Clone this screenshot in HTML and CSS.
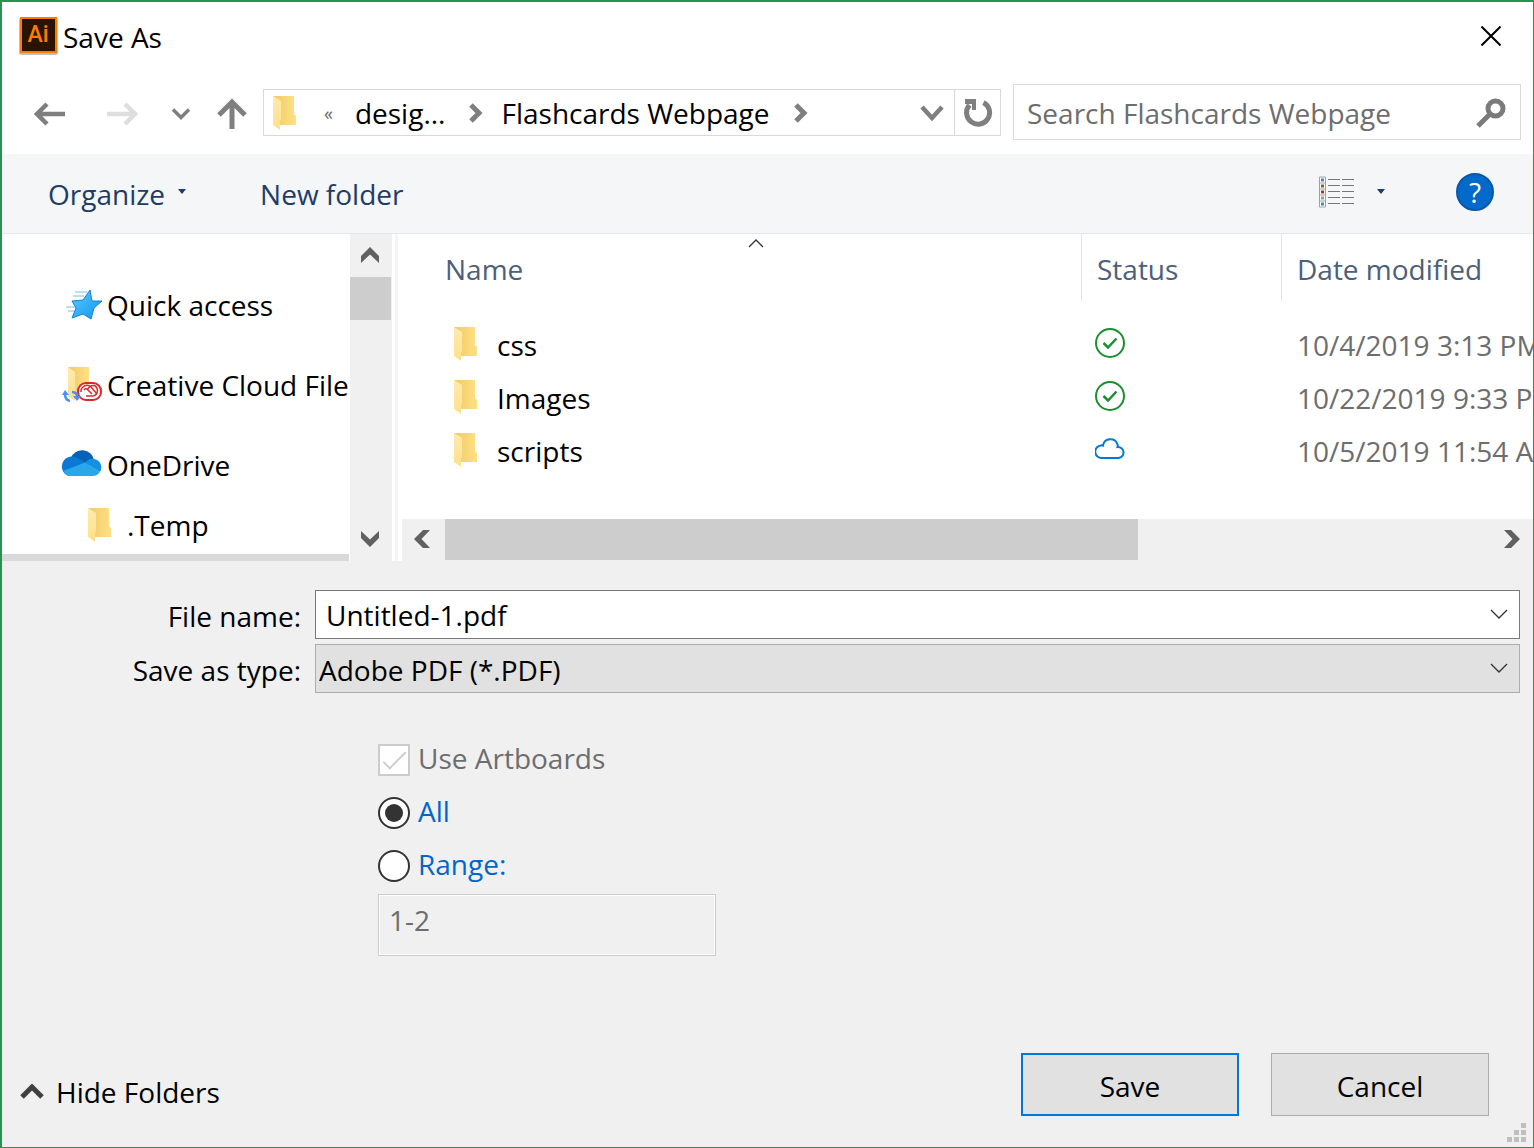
FILE: index.html
```html
<!DOCTYPE html>
<html lang="en">
<head>
<meta charset="utf-8">
<meta name="viewport" content="width=device-width, initial-scale=1">
<title>Save As</title>
<link rel="stylesheet" href="styles.css">
</head>
<body>
<svg class="defs" aria-hidden="true">
  <defs>
    <linearGradient id="folder-back" x1="0" x2="1"><stop offset="0" stop-color="#efca68"/><stop offset="1" stop-color="#ffe083"/></linearGradient>
    <linearGradient id="folder-front" x1="0" x2="0" y1="0" y2="1"><stop offset="0" stop-color="#ffebae"/><stop offset="1" stop-color="#ffe08a"/></linearGradient>
    <linearGradient id="star-fill" x1="0" x2="1" y1="0" y2="1"><stop offset="0" stop-color="#5ccbff"/><stop offset="1" stop-color="#0c95f2"/></linearGradient>
    <symbol id="folder" viewBox="0 0 24 35">
      <path d="M0 0H21V18L23 20V29H6Z" fill="url(#folder-back)"/>
      <path d="M0 0L8 5V24L7 25V34L0 29Z" fill="url(#folder-front)"/>
    </symbol>
    <symbol id="synced" viewBox="0 0 30 30">
      <circle cx="15" cy="15" r="14" fill="none" stroke="#1a8f2d" stroke-width="2"/>
      <path d="M8.500 15L13 19.500L21.500 10.500" fill="none" stroke="#1a8f2d" stroke-width="2.500"/>
    </symbol>
    <symbol id="chevron-thin" viewBox="0 0 18 10">
      <path d="M1 1L9 9L17 1" fill="none" stroke="#333" stroke-width="1.300"/>
    </symbol>
  </defs>
</svg>

<main class="dialog">
  <header class="titlebar">
    <svg class="app-icon" width="40" height="40" viewBox="0 0 40 40" aria-hidden="true">
      <rect x="0" y="2" width="39" height="37" rx="2" fill="#000" opacity=".25"/>
      <rect x="1" y="1" width="37" height="36" fill="#ff7c00"/>
      <rect x="3" y="3" width="33" height="32" fill="#2a1400"/>
      <text x="19" y="26" text-anchor="middle" class="app-letters">Ai</text>
    </svg>
    <h1 class="title">Save As</h1>
    <button class="plain close" type="button" aria-label="Close">
      <svg width="20" height="20" viewBox="0 0 20 20"><path d="M.5.500L19.500 19.500M19.500.500L.5 19.500" stroke="#000" stroke-width="2"/></svg>
    </button>
  </header>

  <nav class="navbar" aria-label="Location">
    <div class="nav-buttons">
      <button class="plain" type="button" aria-label="Back"><svg width="32" height="24" viewBox="0 0 32 24"><path d="M31 12H4M13 2L3 12L13 22" fill="none" stroke="#7f7f7f" stroke-width="4.500"/></svg></button>
      <button class="plain forward" type="button" aria-label="Forward" disabled><svg width="32" height="24" viewBox="0 0 32 24"><path d="M1 12H28M19 2L29 12L19 22" fill="none" stroke="#dedede" stroke-width="4.500"/></svg></button>
      <button class="plain recent" type="button" aria-label="Recent locations"><svg width="20" height="14" viewBox="0 0 20 14"><path d="M2 2.500L10 10.500L18 2.500" fill="none" stroke="#7f7f7f" stroke-width="3.500"/></svg></button>
      <button class="plain" type="button" aria-label="Up"><svg width="30" height="32" viewBox="0 0 30 32"><path d="M15 31V4M2 17L15 4L28 17" fill="none" stroke="#7f7f7f" stroke-width="5"/></svg></button>
    </div>
    <div class="address">
      <div class="crumbs">
        <svg class="crumb-folder" width="24" height="35"><use href="#folder"/></svg>
        <button class="plain overflow" type="button" aria-label="More folders">«</button>
        <button class="plain" type="button">desig...</button>
        <svg class="crumb-arrow" width="14" height="20" viewBox="0 0 14 20"><path d="M2 2L10 10L2 18" fill="none" stroke="#7f7f7f" stroke-width="5"/></svg>
        <button class="plain" type="button">Flashcards Webpage</button>
        <svg class="crumb-arrow last" width="14" height="20" viewBox="0 0 14 20"><path d="M2 2L10 10L2 18" fill="none" stroke="#7f7f7f" stroke-width="5"/></svg>
        <button class="plain history" type="button" aria-label="Previous locations"><svg width="24" height="18" viewBox="0 0 24 18"><path d="M2 3L12 14L22 3" fill="none" stroke="#7f7f7f" stroke-width="4.500"/></svg></button>
      </div>
      <button class="plain refresh" type="button" aria-label="Refresh">
        <svg width="30" height="30" viewBox="0 0 30 30"><path d="M20.500 4.500A11.500 11.500 0 1 1 6.500 7" fill="none" stroke="#7f7f7f" stroke-width="5"/><path d="M2 1H13V12H9V6H2Z" fill="#7f7f7f"/></svg>
      </button>
    </div>
    <form class="search" role="search">
      <input class="search-input" type="text" placeholder="Search Flashcards Webpage" aria-label="Search Flashcards Webpage">
      <button class="plain" type="button" aria-label="Search"><svg width="30" height="30" viewBox="0 0 30 30"><circle cx="19.500" cy="10.500" r="7.500" fill="none" stroke="#7a7a7a" stroke-width="5"/><path d="M14 16L2 28" stroke="#7a7a7a" stroke-width="5"/></svg></button>
    </form>
  </nav>

  <div class="toolbar">
    <button class="plain tool" type="button">Organize <svg class="tool-caret" width="8" height="5" viewBox="0 0 8 5"><path d="M0 0H8L4 5Z" fill="#1e3c66"/></svg></button>
    <button class="plain tool" type="button">New folder</button>
    <button class="plain view" type="button" aria-label="Change view">
      <svg width="36" height="32" viewBox="0 0 36 32">
        <path d="M.5 1H6.500V31H.500ZM.5 7H6.500M.5 13H6.500M.5 19H6.500M.5 25H6.500" fill="#fff" stroke="#a0a0a0"/>
        <path d="M2 2.500h3v3h-3zM2 26.500h3v3h-3z" fill="#4a84c4"/><path d="M2 8.500h3v3h-3z" fill="#7a6428"/><path d="M2 14.500h3v3h-3z" fill="#c62a10"/><path d="M2 20.500h3v3h-3z" fill="#7fae80"/>
        <path d="M9 3.500H21M23 3.500H35M9 9.500H21M23 9.500H35M9 15.500H21M23 15.500H35M9 21.500H21M23 21.500H35M9 27.500H21M23 27.500H35" stroke="#777"/>
      </svg>
      <svg width="8" height="5" viewBox="0 0 8 5"><path d="M0 0H8L4 5Z" fill="#1e3c66"/></svg>
    </button>
    <button class="help" type="button" aria-label="Help">?</button>
  </div>

  <div class="browser">
    <div class="tree">
      <ul class="tree-list">
        <li class="tree-item">
          <svg class="tree-icon" width="42" height="40" viewBox="0 0 42 40"><path d="M29 5L31 16H41L33 23L30 34L22 29L11 33L15 23L11 16L22 15Z" fill="url(#star-fill)" stroke="#1683d0"/><path d="M14 7H26M12 11H23M5 22H14M7 26H13" stroke="#78bdec"/></svg>
          <span>Quick access</span>
        </li>
        <li class="tree-item">
          <svg class="tree-icon" width="42" height="40" viewBox="0 0 42 40">
            <path d="M7 2H28V30H12Z" fill="url(#folder-back)"/><path d="M7 2L14 7V36L7 31Z" fill="url(#folder-front)"/>
            <g fill="none" stroke="#e0252b" stroke-width="1.500"><rect x="17" y="18" width="23" height="17" rx="8" fill="#fff" stroke-width="2"/><path d="M20 27A6 6 0 0 1 30 22L36 29"/><path d="M25 31H32A5.500 5.500 0 0 0 33 20.500Q29 20 26 25M23 25Q25 22 28 26L31 29"/></g>
            <path d="M4 29Q4 35 9 36M16 32Q16 27 11 27" fill="none" stroke="#4c8ff5" stroke-width="2.500"/><path d="M1 30L4 25L8 30ZM12 31H20L16 36Z" fill="#4c8ff5"/>
          </svg>
          <span>Creative Cloud Files</span>
        </li>
        <li class="tree-item">
          <svg class="tree-icon" width="42" height="40" viewBox="0 0 42 40">
            <path d="M10 13A12 12 0 0 1 33 15L24 19Z" fill="#0562b6"/>
            <path d="M9 31A9 9 0 0 1 1 23A10 10 0 0 1 10 11.500Q13 11 16 12.500L27 19L22 29Z" fill="#0b78d4"/>
            <path d="M24 18Q28 13 33 14A8.500 8.500 0 0 1 39 27Z" fill="#1490df"/>
            <path d="M2 26L24 17.500L39 27Q36 31 32 31H9Q5 31 2 26Z" fill="#28a8ea"/>
          </svg>
          <span>OneDrive</span>
        </li>
        <li class="tree-item child">
          <svg width="24" height="35"><use href="#folder"/></svg>
          <span>.Temp</span>
        </li>
      </ul>
      <div class="tree-hbar"></div>
    </div>
    <div class="vscroll">
      <button class="plain" type="button" aria-label="Scroll up"><svg width="18" height="16" viewBox="0 0 18 16"><path d="M9 0L18 9V16L9 7.500L0 16V9Z" fill="#606060"/></svg></button>
      <div class="vthumb"></div>
      <button class="plain down" type="button" aria-label="Scroll down"><svg width="18" height="16" viewBox="0 0 18 16"><path d="M9 16L18 7V0L9 8.500L0 0V7Z" fill="#606060"/></svg></button>
    </div>
    <div class="splitter"></div>
    <div class="files">
      <table class="file-table">
        <thead>
          <tr>
            <th class="col-name" scope="col" aria-sort="ascending">Name<svg class="sort" width="18" height="10" viewBox="0 0 18 10"><path d="M2 9L9 2L16 9" fill="none" stroke="#333" stroke-width="1.300"/></svg></th>
            <th class="col-status" scope="col">Status</th>
            <th class="col-date" scope="col">Date modified</th>
          </tr>
        </thead>
        <tbody>
          <tr>
            <td><div class="file"><svg width="24" height="35"><use href="#folder"/></svg><span>css</span></div></td>
            <td class="status"><svg width="30" height="30" role="img" aria-label="Available"><use href="#synced"/></svg></td>
            <td class="date">10/4/2019 3:13 PM</td>
          </tr>
          <tr>
            <td><div class="file"><svg width="24" height="35"><use href="#folder"/></svg><span>Images</span></div></td>
            <td class="status"><svg width="30" height="30" role="img" aria-label="Available"><use href="#synced"/></svg></td>
            <td class="date">10/22/2019 9:33 PM</td>
          </tr>
          <tr>
            <td><div class="file"><svg width="24" height="35"><use href="#folder"/></svg><span>scripts</span></div></td>
            <td class="status"><svg width="30" height="30" viewBox="0 0 30 30" role="img" aria-label="Online only"><path d="M7 24A5.500 5.500 0 0 1 6 11.500Q7 11 8 11.500A7.500 7.500 0 0 1 22.500 10.500Q23 11.500 22.500 13A5.500 5.500 0 0 1 23.500 24Z" fill="none" stroke="#0078d7" stroke-width="2"/></svg></td>
            <td class="date">10/5/2019 11:54 AM</td>
          </tr>
        </tbody>
      </table>
      <div class="hscroll">
        <button class="plain left" type="button" aria-label="Scroll left"><svg width="16" height="18" viewBox="0 0 16 18"><path d="M0 9L9 0H16L7.500 9L16 18H9Z" fill="#606060"/></svg></button>
        <div class="htrack"><div class="hthumb"></div></div>
        <button class="plain" type="button" aria-label="Scroll right"><svg width="16" height="18" viewBox="0 0 16 18"><path d="M16 9L7 0H0L8.500 9L0 18H7Z" fill="#606060"/></svg></button>
      </div>
    </div>
  </div>

  <form class="details">
    <div class="field">
      <label class="field-label" for="file-name">File name:</label>
      <div class="combo">
        <input class="combo-control" id="file-name" type="text" value="Untitled-1.pdf">
        <svg class="combo-arrow" width="18" height="10" aria-hidden="true"><use href="#chevron-thin"/></svg>
      </div>
    </div>
    <div class="field">
      <label class="field-label" for="file-type">Save as type:</label>
      <div class="combo">
        <select class="combo-control type" id="file-type"><option>Adobe PDF (*.PDF)</option></select>
        <svg class="combo-arrow" width="18" height="10" aria-hidden="true"><use href="#chevron-thin"/></svg>
      </div>
    </div>
    <div class="options">
      <div class="option off"><input class="tick" id="artboards" type="checkbox" checked disabled><label for="artboards">Use Artboards</label></div>
      <div class="option"><input class="radio" id="all" type="radio" name="pages" checked><label for="all">All</label></div>
      <div class="option"><input class="radio" id="range" type="radio" name="pages"><label for="range">Range:</label></div>
      <input class="range-text" type="text" value="1-2" aria-label="Artboard range" disabled>
    </div>
  </form>

  <footer class="footer">
    <button class="plain hide-folders" type="button"><svg width="24" height="16" viewBox="0 0 24 16"><path d="M2 13L12 3L22 13" fill="none" stroke="#404040" stroke-width="5"/></svg><span class="hide-text">Hide Folders</span></button>
    <div class="actions">
      <button class="action primary" type="button">Save</button>
      <button class="action" type="button">Cancel</button>
    </div>
  </footer>
  <svg class="grip" width="19" height="19" viewBox="0 0 19 19" aria-hidden="true"><path d="M14 0h5v5h-5zM7 7h5v5h-5zM14 7h5v5h-5zM0 14h5v5h-5zM7 14h5v5h-5zM14 14h5v5h-5z" fill="#bfbfbf"/></svg>
</main>
</body>
</html>
```
FILE: styles.css
```css
*, *::before, *::after { box-sizing: border-box; }

body {
  margin: 0;
  font: 28px/40px "Open Sans", "Noto Sans", sans-serif;
  color: #000;
}

button, input, select { font: inherit; color: inherit; margin: 0; }
svg { display: block; flex: none; }
.defs { position: absolute; width: 0; height: 0; }

.plain {
  display: flex;
  align-items: center;
  flex: none;
  padding: 0;
  border: 0;
  background: none;
  white-space: nowrap;
}

.dialog {
  position: relative;
  display: flex;
  flex-direction: column;
  min-height: 100vh;
  overflow: hidden;
  background: #f0f0f0;
  border: solid #28924f;
  border-width: 2px 1px 1px 2px;
}

/* Title bar */
.titlebar {
  display: flex;
  align-items: center;
  gap: 4px;
  height: 72px;
  padding: 0 32px 4px 17px;
  background: #fff;
}
.app-letters { font: 500 23px Roboto, sans-serif; fill: #ff7c00; }
.title { margin: 0; padding-top: 2px; font-size: 28px; font-weight: 400; }
.close { margin-left: auto; }

/* Navigation row */
.navbar {
  display: flex;
  align-items: center;
  height: 80px;
  padding: 0 12px 4px 32px;
  background: #fff;
}
.nav-buttons { display: flex; align-items: center; width: 229px; padding-top: 4px; }
.forward { margin-left: 40px; }
.recent { margin: 0 26px 0 33px; }
.address {
  display: flex;
  flex: 1;
  min-width: 0;
  height: 47px;
  border: 1px solid #d9d9d9;
}
.crumbs { display: flex; flex: 1; align-items: center; min-width: 0; padding: 2px 10px 0 9px; }
.overflow { margin: 0 22px 0 27px; font-size: 18px; color: #666; }
.crumb-arrow { margin: 0 18px 0 24px; }
.crumb-arrow.last { margin-right: 0; }
.history { margin-left: auto; }
.refresh { width: 46px; padding-top: 2px; justify-content: center; border-left: 1px solid #d9d9d9; }
.search {
  display: flex;
  align-items: center;
  width: 508px;
  height: 56px;
  margin-left: 12px;
  padding: 2px 14px 0 13px;
  border: 1px solid #d9d9d9;
}
.search-input { flex: 1; min-width: 0; padding: 0; border: 0; outline: 0; background: none; }
.search-input::placeholder { color: #6d6d6d; opacity: 1; }

/* Command bar */
.toolbar {
  display: flex;
  align-items: center;
  height: 80px;
  padding: 0 39px 0 46px;
  background: #f4f6f8;
  border-bottom: 1px solid #e4e6e9;
}
.tool { margin-right: 74px; color: #1e3c66; }
.tool-caret { margin: 0 0 4px 13px; }
.view { gap: 22px; margin: 0 0 4px auto; }
.help {
  width: 38px;
  height: 38px;
  margin: 0 0 4px 71px;
  padding: 0;
  border: 2px solid #0a58a8;
  border-radius: 50%;
  background: #0369ca;
  color: #fff;
  font-size: 28px;
  line-height: 32px;
}

/* Folder tree and file list */
.browser { display: flex; height: 327px; background: #fff; }
.tree { display: flex; flex-direction: column; width: 348px; overflow: hidden; }
.tree-list { flex: 1; min-height: 0; margin: 0; padding: 51px 0 0 59px; list-style: none; }
.tree-item { display: flex; align-items: center; gap: 4px; height: 40px; margin-bottom: 40px; white-space: nowrap; }
.tree-item:nth-child(3) { margin-bottom: 20px; }
.child { gap: 15px; margin: 0; padding-left: 27px; }
.tree-hbar { height: 7px; margin-right: 1px; background: #d9d9d9; }
.vscroll { display: flex; flex-direction: column; width: 42px; background: #f0f0f0; }
.vscroll .plain { height: 43px; justify-content: center; padding: 0 2px 2px 0; }
.vthumb { height: 43px; margin-right: 1px; background: #cdcdcd; }
.vscroll .down { margin-top: auto; }
.splitter { width: 10px; border: solid #fff; border-width: 0 4px 0 3px; background: #f5f5f5; }

.files { display: flex; flex: 1; flex-direction: column; min-width: 0; overflow: hidden; }
.file-table { width: 100%; table-layout: fixed; border-collapse: separate; border-spacing: 0; }
.file-table th { position: relative; height: 67px; padding: 2px 0 0 43px; text-align: left; font-weight: 400; color: #4c607a; border-right: 1px solid #e5e5e5; white-space: nowrap; }
.file-table .col-status { width: 200px; padding-left: 15px; }
.file-table .col-date { width: 251px; padding-left: 15px; border: 0; }
.sort { position: absolute; top: 4px; left: 0; right: 0; margin: 0 auto; translate: 14px; }
.file-table tbody::before { content: ""; display: table-row; height: 18px; }
.file-table td { height: 53px; padding: 0 0 2px; }
.file { display: flex; align-items: center; gap: 19px; padding-left: 52px; }
.status { vertical-align: middle; }
.status svg { margin: 0 0 4px 13px; }
.file-table .date { padding-left: 15px; color: #6d6d6d; white-space: nowrap; overflow: hidden; }
.hscroll { display: flex; height: 42px; margin-top: auto; background: #f0f0f0; }
.hscroll .plain { width: 43px; justify-content: center; padding-bottom: 2px; }
.hscroll .left { padding-right: 4px; }
.htrack { flex: 1; }
.hthumb { width: 66.3%; height: 41px; background: #cdcdcd; }

/* File name, type and artboard options */
.details { padding: 29px 13px 0 0; }
.field { display: flex; align-items: center; height: 49px; margin-bottom: 5px; }
.field-label { width: 313px; padding: 2px 14px 0 0; text-align: right; }
.combo { position: relative; flex: 1; height: 49px; }
.combo-control {
  display: block;
  width: 100%;
  height: 49px;
  padding: 0 44px 0 10px;
  border: 1px solid #7a7a7a;
  border-radius: 0;
  background: #fff;
  appearance: none;
}
.type { padding: 2px 44px 0 3px; border-color: #adadad; background: #e1e1e1; }
.combo-arrow { position: absolute; top: 19px; right: 12px; pointer-events: none; }
.options { margin-top: 40px; padding-left: 376px; }
.option { display: flex; align-items: center; gap: 8px; height: 53px; color: #0066cc; }
.option label { padding-bottom: 4px; }
.off { color: #6d6d6d; }
.tick, .radio { flex: none; display: grid; place-items: center; width: 32px; height: 32px; border: 2px solid #333; background: #fff; appearance: none; }
.tick { border-color: #ccc; }
.tick::before { content: ""; width: 24px; height: 12px; border: solid #ccc; border-width: 0 0 2px 2px; transform: translateY(-3px) rotate(-45deg); clip-path: polygon(0 15%, 100% 15%, 100% 100%, 0 100%); }
.radio { border-radius: 50%; }
.radio:checked::before { content: ""; width: 18px; height: 18px; border-radius: 50%; background: #333; }
.range-text {
  display: block;
  width: 338px;
  height: 62px;
  margin-top: 2px;
  padding: 0 10px 10px;
  border: 1px solid #ccc;
  box-shadow: inset 0 0 0 1px #fff;
  background: #f0f0f0;
  color: #6d6d6d;
}

/* Footer */
.footer { display: flex; align-items: center; justify-content: space-between; margin-top: auto; padding: 0 44px 31px 18px; }
.hide-folders { gap: 12px; padding-top: 14px; }
.hide-text { width: 163px; overflow: hidden; text-align: left; }
.actions { display: flex; gap: 32px; }
.action { width: 218px; height: 63px; padding: 2px 0 0; border: 1px solid #adadad; background: #e1e1e1; }
.primary { border: 2px solid #0078d7; }
.grip { position: absolute; right: 7px; bottom: 5px; }
```
